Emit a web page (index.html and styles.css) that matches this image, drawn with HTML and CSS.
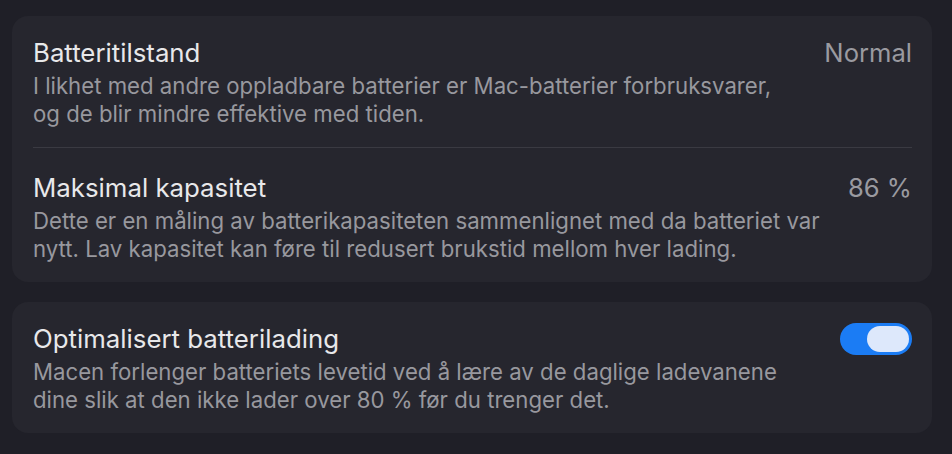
FILE: index.html
```html
<!DOCTYPE html>
<html lang="no">
<head>
<meta charset="utf-8">
<link rel="stylesheet" href="styles.css">
</head>
<body>
<main class="page">
  <section class="card">
    <div class="row">
      <div class="text">
        <div class="title">Batteritilstand</div>
        <div class="desc">I likhet med andre oppladbare batterier er Mac-batterier forbruksvarer,<br>og de blir mindre effektive med tiden.</div>
      </div>
      <div class="value">Normal</div>
    </div>
    <div class="divider"></div>
    <div class="row row-after">
      <div class="text">
        <div class="title">Maksimal kapasitet</div>
        <div class="desc">Dette er en måling av batterikapasiteten sammenlignet med da batteriet var<br>nytt. Lav kapasitet kan føre til redusert brukstid mellom hver lading.</div>
      </div>
      <div class="value">86 %</div>
    </div>
  </section>
  <section class="card">
    <div class="row">
      <div class="text">
        <div class="title">Optimalisert batterilading</div>
        <div class="desc">Macen forlenger batteriets levetid ved å lære av de daglige ladevanene<br>dine slik at den ikke lader over 80 % før du trenger det.</div>
      </div>
      <div class="toggle on"><div class="knob"></div></div>
    </div>
  </section>
</main>
</body>
</html>
```

FILE: styles.css
```css
html, body {
  margin: 0;
  padding: 0;
  background: #1f1f27;
}
body {
  font-family: Inter, "Noto Sans", "Liberation Sans", sans-serif;
  -webkit-font-smoothing: antialiased;
}
.page {
  padding: 16px 20px 0 12px;
  display: flex;
  flex-direction: column;
  gap: 20px;
}
.card {
  background: #26262e;
  border-radius: 16px;
  padding: 0 20px 0 21px;
}
.row {
  display: flex;
  justify-content: space-between;
  align-items: flex-start;
  padding: 22px 0 19px;
}
.row-after {
  padding-top: 25px;
}
.title {
  font-size: 25.8px;
  line-height: 30px;
  color: #e8e8ea;
}
.desc {
  margin-top: 4px;
  font-size: 22.2px;
  line-height: 28px;
  color: #98989e;
}
.value {
  font-size: 25.6px;
  line-height: 30px;
  color: #9a9aa0;
}
.divider {
  height: 1px;
  background: #3a3a42;
}
.toggle {
  width: 72px;
  height: 32px;
  margin-top: -1px;
  border-radius: 16px;
  background: #1b7cf4;
  box-sizing: border-box;
  padding: 3px 3px 3px 27px;
  flex: none;
}
.knob {
  width: 42px;
  height: 26px;
  border-radius: 13px;
  background: #dde8fb;
}
```
